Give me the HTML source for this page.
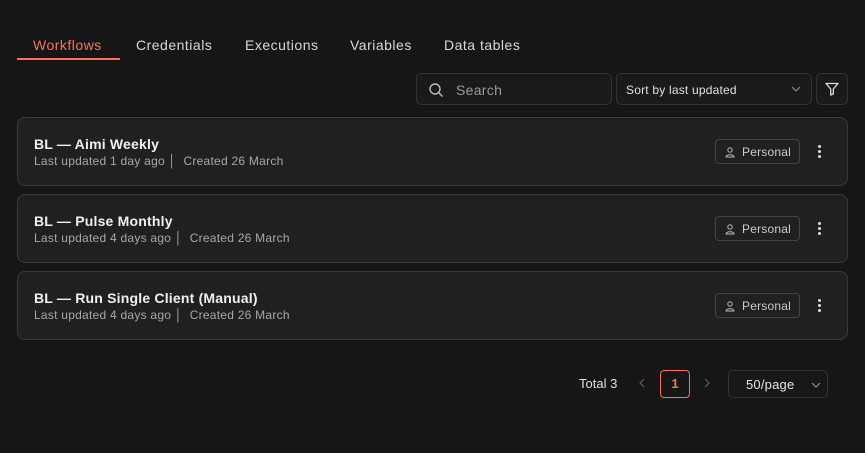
<!DOCTYPE html>
<html><head><style>
*{box-sizing:border-box;margin:0;padding:0}
body{width:865px;height:453px;background:#161616;font-family:"Liberation Sans",sans-serif;color:#e6e6e6;position:relative;overflow:hidden}
.a{position:absolute}
.tab{position:absolute;top:37px;font-size:14px;color:#d8d8d8;letter-spacing:0.5px}
.box{position:absolute;border:1px solid #333;border-radius:5px;background:#1a1a1a}
.card{position:absolute;left:17px;width:831px;height:69px;border:1px solid #3a3a3a;border-radius:8px;background:#202020}
.t{position:absolute;left:16px;top:18px;font-size:14px;font-weight:bold;color:#f0f0f0;letter-spacing:0.2px}
.s{position:absolute;left:16px;top:36px;font-size:12px;color:#a8a8a8;white-space:pre;letter-spacing:0.25px}
.p{position:absolute;right:47px;top:21px;width:85px;height:25px;border:1px solid #444;border-radius:4px;font-size:12px;color:#ccc;padding:5px 0 0 26px;letter-spacing:0.2px}
.d{position:absolute;right:26px;top:27px;width:3px}
.d i{display:block;width:3px;height:3px;background:#ddd;border-radius:50%;margin-bottom:2px}
</style></head><body>
<div class="tab" style="left:33px;color:#ff6f5c">Workflows</div>
<div class="a" style="left:17px;top:58px;width:103px;height:2px;background:#ff6f5c"></div>
<div class="tab" style="left:136px">Credentials</div>
<div class="tab" style="left:245px">Executions</div>
<div class="tab" style="left:350px">Variables</div>
<div class="tab" style="left:444px">Data tables</div>

<div class="box" style="left:416px;top:73px;width:196px;height:32px">
<svg class="a" style="left:11px;top:8px" width="16" height="16" viewBox="0 0 16 16" fill="none" stroke="#bbb" stroke-width="1.4"><circle cx="7" cy="7" r="5"/><path d="M11 11l3.5 3.5"/></svg>
<span class="a" style="left:39px;top:8px;font-size:14px;color:#999;letter-spacing:0.3px">Search</span></div>
<div class="box" style="left:616px;top:73px;width:196px;height:32px">
<span class="a" style="left:9px;top:9px;font-size:12px;color:#e0e0e0;letter-spacing:0.2px">Sort by last updated</span>
<svg class="a" style="left:174px;top:12px" width="10" height="6" viewBox="0 0 10 6" fill="none" stroke="#999"><path d="M1 1l4 4 4-4"/></svg></div>
<div class="box" style="left:816px;top:73px;width:32px;height:32px">
<svg class="a" style="left:8px;top:8px" width="14" height="14" viewBox="0 0 14 14" fill="none" stroke="#ddd" stroke-width="1.3" stroke-linejoin="round"><path d="M1 1.5h12L8.3 7v5L5.7 13V7z"/></svg></div>

<div class="card" style="top:117px"><div class="t">BL — Aimi Weekly</div><div class="s">Last updated 1 day ago │  Created 26 March</div><div class="p">Personal</div><svg class="a" style="right:112px;top:29px" width="10" height="11" viewBox="0 0 10 11" fill="none" stroke="#bbb"><circle cx="5" cy="3" r="2.2"/><path d="M1 10c0-3 8-3 8 0z"/></svg><div class="d"><i></i><i></i><i></i></div></div>
<div class="card" style="top:194px"><div class="t">BL — Pulse Monthly</div><div class="s">Last updated 4 days ago │  Created 26 March</div><div class="p">Personal</div><svg class="a" style="right:112px;top:29px" width="10" height="11" viewBox="0 0 10 11" fill="none" stroke="#bbb"><circle cx="5" cy="3" r="2.2"/><path d="M1 10c0-3 8-3 8 0z"/></svg><div class="d"><i></i><i></i><i></i></div></div>
<div class="card" style="top:271px"><div class="t">BL — Run Single Client (Manual)</div><div class="s">Last updated 4 days ago │  Created 26 March</div><div class="p">Personal</div><svg class="a" style="right:112px;top:29px" width="10" height="11" viewBox="0 0 10 11" fill="none" stroke="#bbb"><circle cx="5" cy="3" r="2.2"/><path d="M1 10c0-3 8-3 8 0z"/></svg><div class="d"><i></i><i></i><i></i></div></div>

<span class="a" style="left:579px;top:376px;font-size:13px;color:#e0e0e0">Total 3</span>
<svg class="a" style="left:639px;top:378px" width="6" height="10" viewBox="0 0 6 10" fill="none" stroke="#666"><path d="M5 1L1 5l4 4"/></svg>
<div class="a" style="left:660px;top:370px;width:30px;height:28px;border:1px solid #ff6f5c;border-radius:4px;color:#ff6f5c;font-size:13px;font-weight:bold;text-align:center;line-height:26px">1</div>
<svg class="a" style="left:704px;top:378px" width="6" height="10" viewBox="0 0 6 10" fill="none" stroke="#666"><path d="M1 1l4 4-4 4"/></svg>
<div class="box" style="left:728px;top:370px;width:100px;height:28px;border-color:#333;background:#181818">
<span class="a" style="left:17px;top:6px;font-size:13px;color:#e6e6e6;letter-spacing:0.2px">50/page</span>
<svg class="a" style="left:82px;top:11px" width="10" height="6" viewBox="0 0 10 6" fill="none" stroke="#999"><path d="M1 1l4 4 4-4"/></svg></div>
</body></html>
